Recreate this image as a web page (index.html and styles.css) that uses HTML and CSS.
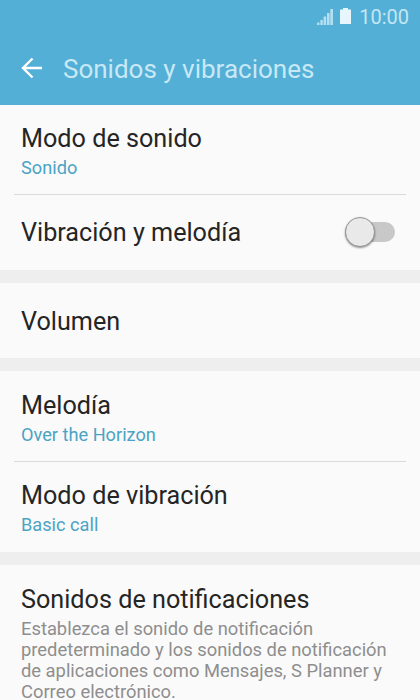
FILE: index.html
```html
<!DOCTYPE html>
<html lang="es">
  <head>
    <meta charset="utf-8">
    <title>Sonidos y vibraciones</title>
    <link rel="stylesheet" href="styles.css">
  </head>
  <body>
    <header class="topbar">
      <div class="statusbar">
        <svg class="signal" width="16" height="16" viewBox="0 0 16 16">
          <path d="M0 13.500h2.500V16H0zM3.300 11h2.500v5H3.300zM6.600 7.500h2.600V16H6.600zM10 4h2.600v12H10zM13.300 0h2.700v16h-2.700z" />
        </svg>
        <svg class="battery" width="11" height="16" viewBox="0 0 11 16">
          <path d="M3 0h5v1.500h3V16H0V1.500h3z" />
        </svg>
        <span class="clock">10:00</span>
      </div>
      <div class="toolbar">
        <svg class="back" width="22" height="22" viewBox="0 0 22 22">
          <path d="M21 11H2M11.500 1.500L2 11l9.500 9.500" />
        </svg>
        <h1>Sonidos y vibraciones</h1>
      </div>
    </header>
    <main>
      <section class="group">
        <div class="item sound-mode">
          <h2>Modo de sonido</h2>
          <p class="value">Sonido</p>
        </div>
        <div class="item vibrate">
          <h2>Vibración y melodía</h2>
          <div class="switch"><span class="thumb"></span></div>
        </div>
      </section>
      <section class="group">
        <div class="item volume">
          <h2>Volumen</h2>
        </div>
      </section>
      <section class="group">
        <div class="item ringtone">
          <h2>Melodía</h2>
          <p class="value">Over the Horizon</p>
        </div>
        <div class="item vibration-mode">
          <h2>Modo de vibración</h2>
          <p class="value">Basic call</p>
        </div>
      </section>
      <section class="group">
        <div class="item notifications">
          <h2>Sonidos de notificaciones</h2>
          <p class="description">Establezca el sonido de notificación<br>predeterminado y los sonidos de notificación<br>de aplicaciones como Mensajes, S Planner y<br>Correo electrónico.</p>
        </div>
      </section>
    </main>
  </body>
</html>
```
FILE: styles.css
```css
:root {
  --bar-color: #53afd6;
  --bg-color: #fafafa;
  --gap-color: #eeeeee;
  --text-color: #252525;
  --value-color: #4ba3c3;
}

* {
  box-sizing: border-box;
}

body {
  margin: 0;
  height: 700px;
  overflow: hidden;
  background: var(--gap-color);
  color: var(--text-color);
  font-family: Roboto, sans-serif;
}

h1, h2, p {
  margin: 0;
  font-weight: 400;
  white-space: nowrap;
}

/*----- TOP BAR -----*/

.topbar {
  height: 105px;
  background: var(--bar-color);
}

.statusbar {
  height: 33px;
  padding-right: 11px;
  display: flex;
  align-items: center;
  justify-content: flex-end;
  color: #c4e6f4;
  fill: currentColor;
}

.signal {
  fill: #b4dff0;
}

.battery {
  margin: 0 8px 2px 7px;
  fill: #e6f6fc;
}

.clock {
  font-size: 20px;
}

.toolbar {
  height: 72px;
  padding-left: 20px;
  display: flex;
  align-items: center;
}

.back {
  margin: 0 0 2px 1px;
  fill: none;
  stroke: #fff;
  stroke-width: 2.4;
}

.toolbar h1 {
  margin-left: 20px;
  color: #c8e8f5;
  font-size: 26px;
}

/*----- LIST -----*/

.group {
  margin-bottom: 13px;
  padding: 0 14px;
  background: var(--bg-color);
}

.item {
  padding: 18px 7px 0;
}

.item + .item {
  border-top: 1px solid #dadada;
}

.item h2 {
  font-size: 25.2px;
  line-height: 32px;
}

.value {
  color: var(--value-color);
  font-size: 18.2px;
  line-height: 26px;
}

.sound-mode {
  height: 89px;
}

.item.vibrate {
  height: 76px;
  padding-top: 0;
  display: flex;
  align-items: center;
  justify-content: space-between;
}

.item.volume {
  height: 75px;
  padding-top: 23px;
}

.item.ringtone {
  height: 90px;
  padding-top: 19px;
}

.vibration-mode {
  height: 91px;
}

.item.notifications {
  height: 150px;
  padding-top: 19px;
}

.description {
  padding-top: 2px;
  color: #8e8e8e;
  font-size: 18.35px;
  line-height: 21px;
}

.switch {
  width: 50px;
  height: 20px;
  margin: 0 4px 1px 0;
  border-radius: 10px;
  background: #c8c8c8;
  display: flex;
  align-items: center;
}

.thumb {
  flex: none;
  width: 30px;
  height: 30px;
  border: 1px solid #969696;
  border-radius: 50%;
  background: #e9e9e9;
  box-shadow: 0 1px 2px rgba(0, 0, 0, 0.45);
}
```
